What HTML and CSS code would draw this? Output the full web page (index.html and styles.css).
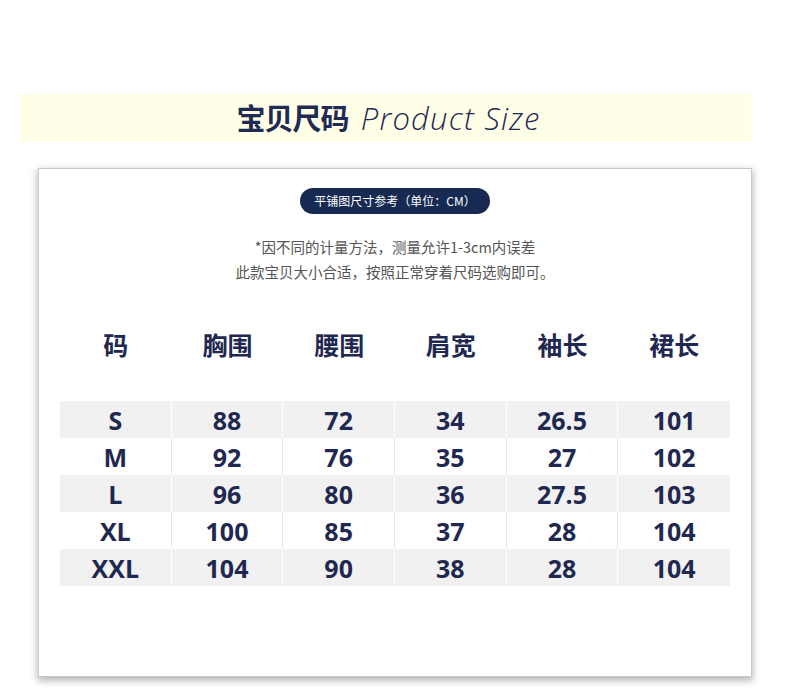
FILE: index.html
```html
<!DOCTYPE html>
<html lang="zh-CN">
<head>
<meta charset="utf-8">
<title>宝贝尺码</title>
<link rel="stylesheet" href="styles.css">
</head>
<body>
<div class="banner">
  <h1 class="title"><span class="title-cn">宝贝尺码</span> <span class="title-en">Product Size</span></h1>
</div>
<div class="card">
  <div class="pill">平铺图尺寸参考（单位：CM）</div>
  <p class="desc">*因不同的计量方法，测量允许1-3cm内误差<br>此款宝贝大小合适，按照正常穿着尺码选购即可。</p>
  <div class="head-row">
    <div>码</div><div>胸围</div><div>腰围</div><div>肩宽</div><div>袖长</div><div>裙长</div>
  </div>
  <div class="table">
    <div class="row odd"><div>S</div><div>88</div><div>72</div><div>34</div><div>26.5</div><div>101</div></div>
    <div class="row"><div>M</div><div>92</div><div>76</div><div>35</div><div>27</div><div>102</div></div>
    <div class="row odd"><div>L</div><div>96</div><div>80</div><div>36</div><div>27.5</div><div>103</div></div>
    <div class="row"><div>XL</div><div>100</div><div>85</div><div>37</div><div>28</div><div>104</div></div>
    <div class="row odd"><div>XXL</div><div>104</div><div>90</div><div>38</div><div>28</div><div>104</div></div>
  </div>
</div>
</body>
</html>
```

FILE: styles.css
```css
* { box-sizing: border-box; }
html, body { margin: 0; padding: 0; background: #fff; }
body { width: 790px; height: 692px; overflow: hidden; font-family: "Open Sans", "Noto Sans CJK SC", sans-serif; color: #1f2850; }

.banner {
  margin: 94px 0 0 20px;
  width: 731px;
  height: 48px;
  background: #fffee6;
  display: flex;
  align-items: center;
  justify-content: center;
}
.title { margin: 0; font-weight: normal; line-height: 48px; white-space: nowrap; padding-bottom: 2px; padding-left: 6px; }
.title-cn { font-family: "Noto Sans CJK SC", sans-serif; font-weight: 700; font-size: 29px; color: #1f2a55; letter-spacing: -1px; }
.title-en { font-family: "Open Sans", sans-serif; font-style: italic; font-weight: 300; font-size: 31px; color: #1f2a55; letter-spacing: 1.2px; margin-left: 4px; }

.card {
  margin: 26px 0 0 38px;
  width: 714px;
  height: 509px;
  background: #fff;
  border: 1px solid #c9c9bd;
  box-shadow: 0 3px 7px 1px rgba(0,0,0,0.28);
  padding: 19px 21px 0;
  display: flex;
  flex-direction: column;
  align-items: center;
}
.pill {
  height: 26px;
  line-height: 26px;
  padding: 0 14px;
  border-radius: 13px;
  background: #162a52;
  color: #fff;
  font-family: "Noto Sans CJK SC", sans-serif;
  font-size: 12px;
}
.desc {
  margin: 20px 0 0;
  text-align: center;
  font-family: "Noto Sans CJK SC", sans-serif;
  font-size: 14.5px;
  line-height: 25px;
  color: #555;
}
.head-row, .row {
  width: 670px;
  display: grid;
  grid-template-columns: repeat(6, 1fr);
}
.head-row {
  margin-top: 40px;
  height: 40px;
  align-items: center;
  font-family: "Noto Sans CJK SC", sans-serif;
  font-weight: 700;
  font-size: 25px;
  text-align: center;
  color: #1f2850;
}
.table { margin-top: 37px; }
.row { height: 37px; }
.row > div {
  display: flex;
  align-items: center;
  justify-content: center;
  font-family: "Open Sans", sans-serif;
  font-weight: 700;
  font-size: 25px;
  color: #1f2850;
  border-right: 1px solid #e6e6e6;
}
.row > div:last-child { border-right: none; }
.row.odd > div { background: #f1f1f1; border-right-color: #fff; }
.row.odd > div:last-child { border-right: none; }
```
